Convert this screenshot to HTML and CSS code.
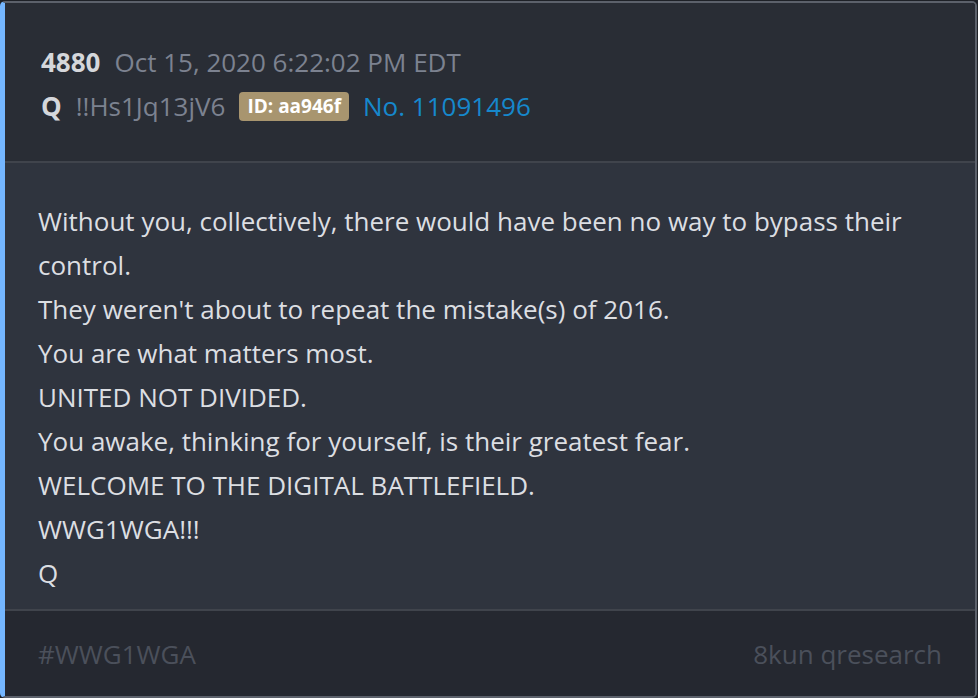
FILE: index.html
```html
<!DOCTYPE html>
<html>
<head>
<meta charset="utf-8">
<link rel="stylesheet" href="styles.css">
</head>
<body>
<div class="card">
  <div class="head">
    <div class="row"><span class="num">4880</span><span class="date">Oct 15, 2020 6:22:02 PM EDT</span></div>
    <div class="row"><span class="name">Q</span><span class="trip">!!Hs1Jq13jV6</span><span class="badge">ID: aa946f</span><span class="no">No. 11091496</span></div>
  </div>
  <div class="body">
    <p>Without you, collectively, there would have been no way to bypass their control.</p>
    <p>They weren't about to repeat the mistake(s) of 2016.</p>
    <p>You are what matters most.</p>
    <p>UNITED NOT DIVIDED.</p>
    <p>You awake, thinking for yourself, is their greatest fear.</p>
    <p>WELCOME TO THE DIGITAL BATTLEFIELD.</p>
    <p>WWG1WGA!!!</p>
    <p>Q</p>
  </div>
  <div class="foot">
    <span>#WWG1WGA</span><span>8kun qresearch</span>
  </div>
</div>
</body>
</html>
```
FILE: styles.css
```css
html, body { margin: 0; padding: 0; background: #1e2127; }
body { font-family: "Open Sans", "Noto Sans", sans-serif; }
.card {
  box-sizing: border-box;
  width: 977px;
  height: 697px;
  margin-top: 1px;
  border: 2px solid #5c616b;
  border-left: 5px solid #74b6ff;
  border-radius: 5px;
  overflow: hidden;
  display: flex;
  flex-direction: column;
}
.head {
  background: #292d35;
  padding: 37px 36px 36px;
  border-bottom: 2px solid #40444c;
  height: 160px;
  box-sizing: border-box;
}
.row { display: flex; align-items: center; height: 44px; gap: 14px; font-size: 26px; }
.num { color: #d5d7db; font-weight: 700; }
.date { color: #7c8290; }
.name { color: #d5d7db; font-weight: 700; }
.trip { color: #7c8290; }
.badge {
  background: #a8956f;
  color: #fff;
  font-weight: 700;
  font-size: 19px;
  padding: 0 8px;
  border-radius: 4px;
  line-height: 29px;
}
.no { color: #1688cc; }
.body {
  background: #2f343e;
  padding: 36px 33px 12px;
  border-bottom: 2px solid #40444c;
  height: 448px;
  box-sizing: border-box;
}
.body p { margin: 0; color: #dcdee2; font-size: 26px; line-height: 44px; }
.foot {
  flex: 1;
  background: #252830;
  display: flex;
  justify-content: space-between;
  align-items: center;
  padding: 0 33px 0 33px;
  color: #4b505b;
  font-size: 26px;
}
```
